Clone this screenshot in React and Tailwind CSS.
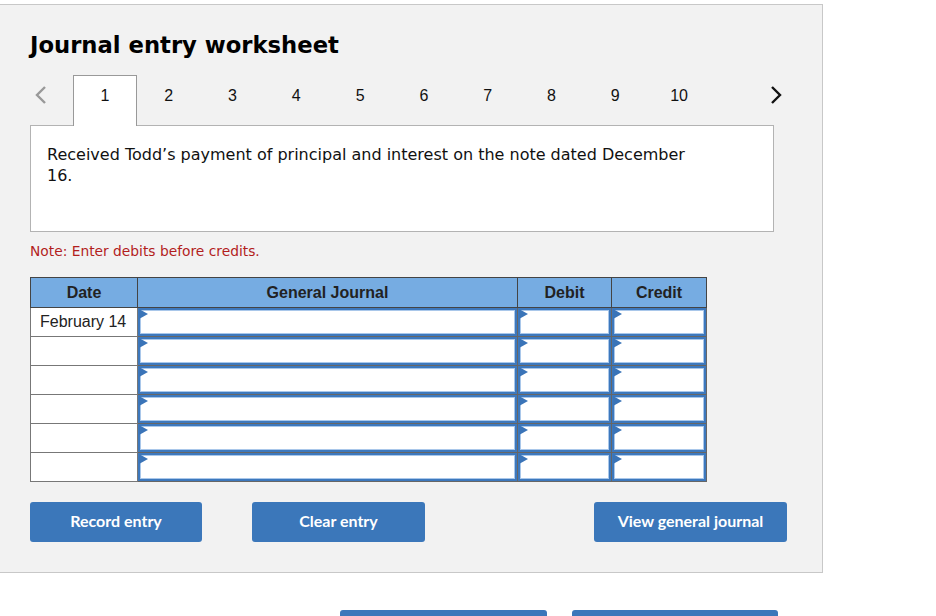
import React from 'react';

const tabs = [1, 2, 3, 4, 5, 6, 7, 8, 9, 10];

const InputCell = () => (
    <td className="p-0 border border-[#666] h-[29px]">
        <div className="relative h-full w-full border-2 border-[#3d78bd] bg-white">
            <div className="absolute inset-0 border border-[#a9c7ea]" />
            <svg className="absolute -left-[1px] -top-[1px]" width="9" height="10" viewBox="0 0 9 10">
                <polygon points="0,0 9,5 0,10" fill="#3a74b8" />
            </svg>
        </div>
    </td>
);

const JournalRow = ({ date }) => (
    <tr className="h-[28.8px]">
        <td className="border border-[#777] bg-white pl-[9px] text-[16px] text-[#222] text-left whitespace-nowrap">{date}</td>
        <InputCell />
        <InputCell />
        <InputCell />
    </tr>
);

const App = () => {
    return (
        <div className="w-[936px] h-[616px] bg-white overflow-hidden relative" style={{ fontFamily: '"Liberation Sans", Arial, sans-serif' }}>
            <div className="mt-[4px] w-[823px] h-[569px] bg-[#f2f2f2] border-t border-r border-b border-[#c8c8c8] pl-[30px] pt-[25px]">
                <h1 className="text-[22.7px] leading-[30px] font-bold text-black" style={{ fontFamily: '"DejaVu Sans", Verdana, sans-serif' }}>
                    Journal entry worksheet
                </h1>

                {/* tabs */}
                <div className="flex items-end mt-[14px] h-[51px] w-[743px]">
                    <div className="w-[43px] h-full flex items-center pl-[4px] pb-[9px]">
                        <svg width="14" height="20" viewBox="0 0 14 20">
                            <polyline points="11,2 3,10 11,18" fill="none" stroke="#999" strokeWidth="2.4" />
                        </svg>
                    </div>
                    {tabs.map(t => (
                        <div
                            key={t}
                            className={`w-[63.8px] h-full flex items-center justify-center text-[16px] text-[#111] ${t === 1 ? 'bg-white border-t border-l border-r border-[#999] relative z-10 mb-[-1px] h-[52px] pb-[10px]' : 'pb-[7px]'}`}
                        >
                            {t}
                        </div>
                    ))}
                    <div className="flex-1 h-full flex items-center justify-end pb-[9px]">
                        <svg width="14" height="20" viewBox="0 0 14 20" className="mr-[-10px]">
                            <polyline points="3,2 11,10 3,18" fill="none" stroke="#111" strokeWidth="2.4" />
                        </svg>
                    </div>
                </div>

                <div className="w-[744px] h-[107px] bg-white border border-[#b3b3b3] pl-[16px] pt-[18px] pr-[60px] text-[16px] leading-[21px] text-[#111]" style={{ fontFamily: '"DejaVu Sans", Verdana, sans-serif' }}>
                    Received Todd’s payment of principal and interest on the note dated December 16.
                </div>

                <p className="mt-[10px] text-[13.8px] leading-[18px] text-[#b21e1e]" style={{ fontFamily: '"DejaVu Sans", Verdana, sans-serif' }}>
                    Note: Enter debits before credits.
                </p>

                <table className="mt-[17px] border-collapse w-[677px] table-fixed">
                    <colgroup>
                        <col className="w-[107px]" />
                        <col className="w-[380px]" />
                        <col className="w-[94px]" />
                        <col className="w-[95px]" />
                    </colgroup>
                    <thead>
                        <tr className="h-[30px] bg-[#76ace2] text-[16px] font-bold text-[#222]">
                            <th className="border border-[#444] font-bold">Date</th>
                            <th className="border border-[#444] font-bold">General Journal</th>
                            <th className="border border-[#444] font-bold">Debit</th>
                            <th className="border border-[#444] font-bold">Credit</th>
                        </tr>
                    </thead>
                    <tbody>
                        <JournalRow date="February 14" />
                        <JournalRow date="" />
                        <JournalRow date="" />
                        <JournalRow date="" />
                        <JournalRow date="" />
                        <JournalRow date="" />
                    </tbody>
                </table>

                <div className="flex mt-[20px] h-[40px] w-[757px]" style={{ fontFamily: 'Lato, sans-serif' }}>
                    <button className="w-[172px] h-[40px] bg-[#3b77ba] rounded-[3px] text-white text-[16px] font-bold pb-[3px]">Record entry</button>
                    <button className="ml-[50px] w-[173px] h-[40px] bg-[#3b77ba] rounded-[3px] text-white text-[16px] font-bold pb-[3px]">Clear entry</button>
                    <button className="ml-auto w-[193px] h-[40px] bg-[#3b77ba] rounded-[3px] text-white text-[16px] font-bold pb-[3px]">View general journal</button>
                </div>
            </div>

            <div className="flex mt-[37px] ml-[340px] gap-[25px]">
                <div className="w-[207px] h-[10px] bg-[#3b77ba] rounded-t-[3px]" />
                <div className="w-[206px] h-[10px] bg-[#3b77ba] rounded-t-[3px]" />
            </div>
        </div>
    );
};

export default App;
